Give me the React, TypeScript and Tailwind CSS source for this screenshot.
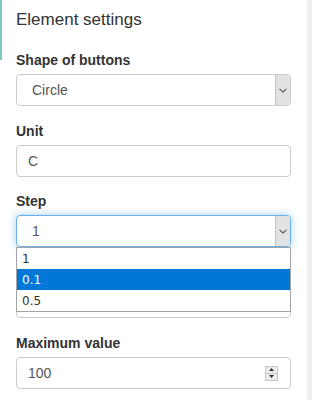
const Chevron = () => (
  <svg width="8" height="5" viewBox="0 0 8 5" className="block">
    <path d="M0.5 0.8 L4 4 L7.5 0.8" fill="none" stroke="#5a5a5a" strokeWidth="1.1" />
  </svg>
);

const SelectBox = ({ value, focused }: { value: string; focused?: boolean }) => (
  <div
    className={
      focused
        ? "flex h-[32px] items-stretch rounded-[4px] border border-[#66afe9] bg-white shadow-[0_0_8px_rgba(102,175,233,0.6)]"
        : "flex h-[32px] items-stretch rounded-[4px] border border-[#cccccc] bg-white"
    }>
    <div className="flex flex-1 items-center pl-[15px] text-[14px] text-[#555555]">{value}</div>
    <div className="flex w-[15px] items-center justify-center rounded-r-[3px] border-l border-[#c4c4c4] bg-[#e2e2e2]">
      <Chevron />
    </div>
  </div>
);

const TextBox = ({ value, spinner }: { value?: string; spinner?: boolean }) => (
  <div className="flex h-[32px] items-center rounded-[4px] border border-[#cccccc] bg-white pl-[11px] pr-[12px] text-[14px] text-[#555555]">
    <span className="flex-1">{value}</span>
    {spinner && (
      <div className="flex h-[15px] w-[13px] flex-col border border-[#c8c8c8] bg-[#ececec]">
        <div className="flex flex-1 items-center justify-center border-b border-[#c8c8c8]">
          <svg width="5" height="3" viewBox="0 0 5 3">
            <path d="M0 3 L2.5 0 L5 3 Z" fill="#333" />
          </svg>
        </div>
        <div className="flex flex-1 items-center justify-center">
          <svg width="5" height="3" viewBox="0 0 5 3">
            <path d="M0 0 L2.5 3 L5 0 Z" fill="#333" />
          </svg>
        </div>
      </div>
    )}
  </div>
);

const Label = ({ children }: { children?: string }) => (
  <div className="mb-[5px] h-[18px] text-[14px] font-bold leading-[18px] text-[#333333]">{children}</div>
);

const stepOptions = ["1", "0.1", "0.5"];

export default function App() {
  return (
    <div className="flex h-[400px] w-[312px] overflow-hidden bg-white font-['Liberation_Sans',Arial,sans-serif]">
      <div className="h-[60px] w-[2px] bg-[#80c6c0]" />
      <div className="flex-1 pl-[14px] pr-[16px] pt-[8px]">
        <h2 className="mb-[19px] text-[17px] leading-[24px] text-[#333333]">Element settings</h2>

        <div className="mb-[16px]">
          <Label>Shape of buttons</Label>
          <SelectBox value="Circle" />
        </div>

        <div className="mb-[15px]">
          <Label>Unit</Label>
          <TextBox value="C" />
        </div>

        <div className="relative z-10 mb-[16px]">
          <Label>Step</Label>
          <SelectBox value="1" focused />
          <div className="absolute left-0 right-0 top-full border border-[#a3a3a3] bg-white font-['DejaVu_Sans',sans-serif] text-[12px] text-[#333333]">
            {stepOptions.map((opt, i) => (
              <div
                key={opt}
                className={
                  i === 1
                    ? "flex h-[21px] items-center bg-[#0078d7] pl-[5px] text-white"
                    : "flex h-[21px] items-center pl-[5px]"
                }>
                {opt}
              </div>
            ))}
          </div>
        </div>

        {/* minimum value field, hidden under the open list */}
        <div className="mb-[16px]">
          <Label />
          <TextBox />
        </div>

        <div>
          <Label>Maximum value</Label>
          <TextBox value="100" spinner />
        </div>
      </div>
      <div className="w-[5px] bg-[#eeeeee]" />
    </div>
  );
}
